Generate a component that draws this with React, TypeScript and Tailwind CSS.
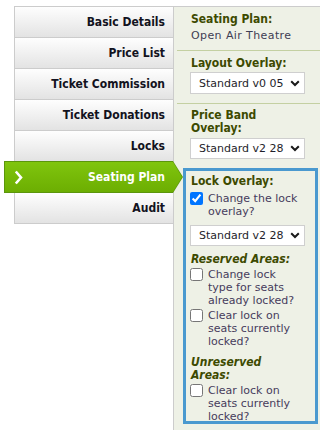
import React from 'react';

const navItems = ['Basic Details', 'Price List', 'Ticket Commission', 'Ticket Donations', 'Locks', 'Seating Plan', 'Audit'];
const activeItem = 'Seating Plan';

const boldFont = "[font-family:'DejaVu_Sans_Condensed','DejaVu_Sans',sans-serif] font-bold text-[12px] leading-[13px]";
const heading = `${boldFont} text-[#3d4a00]`;

const Chevron: React.FC = () => (
  <svg width="10" height="7" viewBox="0 0 10 7" className="shrink-0">
    <path d="M1.2 1.2 L5 5 L8.8 1.2" stroke="#1a1a1a" strokeWidth="2" fill="none" />
  </svg>
);

const FakeSelect: React.FC<{ value: string; className?: string }> = ({ value, className = '' }) => (
  <div className={`flex items-center w-[115px] bg-white border border-[#cfcfcf] pl-[8px] pr-[4px] text-[#1e1e2a] ${className}`}>
    <span className="flex-1 overflow-hidden whitespace-nowrap">{value}</span>
    <Chevron />
  </div>
);

const CheckRow: React.FC<{ checked?: boolean; className?: string; children: React.ReactNode }> = ({ checked, className = '', children }) => (
  <label className={`flex items-start ${className}`}>
    <input type="checkbox" defaultChecked={checked} className="w-[13px] h-[13px] shrink-0 m-0" />
    <span className="ml-[5px] whitespace-nowrap text-[#463c5c]">{children}</span>
  </label>
);

const App: React.FC = () => {
  return (
    <div className="flex h-[430px] overflow-hidden bg-white pt-[6px] pl-[14px] [font-family:'DejaVu_Sans',sans-serif] text-[11px] leading-[13px] text-[#3e3e54]">
      <nav className="relative z-10 w-[160px] shrink-0">
        {navItems.map((item, i) =>
          item === activeItem ? (
            <div
              key={item}
              className="relative -mt-px -ml-[10px] h-[32px] w-[179px] bg-[#5b960c] [clip-path:polygon(0_0,169px_0,179px_16px,169px_32px,0_32px)]"
            >
              <div className="absolute inset-[1px] flex items-center bg-linear-to-b from-[#80c50e] to-[#6cae02] pl-[9px] pr-[17px] [clip-path:polygon(0_0,168px_0,177px_15px,168px_30px,0_30px)]">
                <svg width="9" height="15" viewBox="0 0 9 15">
                  <path d="M1.8 1.5 L7 7.5 L1.8 13.5" stroke="white" strokeWidth="2.6" fill="none" />
                </svg>
                <span className={`${boldFont} ml-auto text-white`}>{item}</span>
              </div>
            </div>
          ) : (
            <div
              key={item}
              className={`${i === 0 ? '' : '-mt-px'} flex h-[32px] items-center justify-end border border-[#cccccc] bg-linear-to-b from-[#fefefe] to-[#e3e3e3] pr-[8px]`}
            >
              <span className={`${boldFont} text-[#121220]`}>{item}</span>
            </div>
          )
        )}
      </nav>

      <div className="-ml-px flex-1 border-l border-t border-[#cccccc] bg-[#eef1e6]">
        <div className="pl-[3px]">
          <section className="border-b border-[#c4d0a2] pl-[14px] pt-[6px] pb-[8px]">
            <h3 className={heading}>Seating Plan:</h3>
            <p className="mt-[3px] tracking-[0.4px]">Open Air Theatre</p>
          </section>

          <section className="border-b border-[#c4d0a2] pl-[14px] pt-[6px] pb-[9px]">
            <h3 className={heading}>Layout Overlay:</h3>
            <FakeSelect value="Standard v0 05" className="-ml-px mt-[2px] h-[22px]" />
          </section>

          <section className="pl-[14px] pt-[5px]">
            <h3 className={heading}>
              Price Band
              <br />
              Overlay:
            </h3>
            <FakeSelect value="Standard v2 28" className="-ml-px mt-[3px] h-[21px]" />
          </section>

          <div className="ml-[6px] mr-[2px] mt-[9px] h-[256px] border-[3px] border-[#4a99cf] pl-[4px] pt-[4px]">
            <h3 className={`${heading} pl-px`}>Lock Overlay:</h3>
            <CheckRow checked className="mt-[4px]">
              Change the lock
              <br />
              overlay?
            </CheckRow>
            <FakeSelect value="Standard v2 28" className="mt-[7px] h-[21px]" />

            <h4 className={`${heading} italic mt-[7px] pl-px`}>Reserved Areas:</h4>
            <CheckRow className="mt-[2px]">
              Change lock
              <br />
              type for seats
              <br />
              already locked?
            </CheckRow>
            <CheckRow className="mt-[2px]">
              Clear lock on
              <br />
              seats currently
              <br />
              locked?
            </CheckRow>

            <h4 className={`${heading} italic mt-[8px] pl-px`}>
              Unreserved
              <br />
              Areas:
            </h4>
            <CheckRow className="mt-[2px]">
              Clear lock on
              <br />
              seats currently
              <br />
              locked?
            </CheckRow>
          </div>
        </div>
      </div>
    </div>
  );
};

export default App;
